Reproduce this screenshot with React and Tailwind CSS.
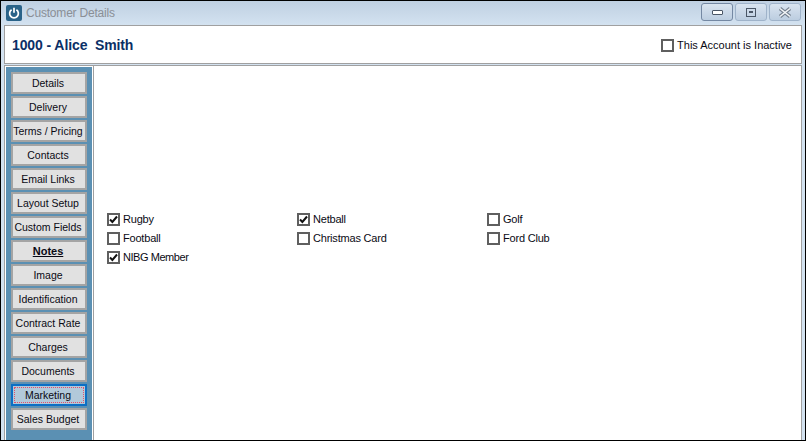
const nav = ["Details","Delivery","Terms / Pricing","Contacts","Email Links","Layout Setup","Custom Fields","Notes","Image","Identification","Contract Rate","Charges","Documents","Marketing","Sales Budget"];

function Check({ checked, label, tight }) {
  return (
    <div className="flex items-center h-[19px]">
      <span className="w-[13px] h-[13px] border-2 border-[#5f5f5f] bg-white flex items-center justify-center shrink-0">
        {checked && (
          <svg width="9" height="9" viewBox="0 0 9 9"><path d="M1 4.5 L3.4 7 L8 1.5" fill="none" stroke="#111" strokeWidth="2" /></svg>
        )}
      </span>
      <span className={`ml-[3px] text-[11px] leading-none text-[#0a0a14] ${tight ? "tracking-[-0.45px]" : "tracking-[-0.2px]"}`}>{label}</span>
    </div>
  );
}

function WinBtn({ children, border }) {
  return (
    <div className={`w-[32px] h-[18px] rounded-[3px] border ${border} bg-gradient-to-b from-[#d9e4f0] to-[#bccde0] flex items-center justify-center`}>
      {children}
    </div>
  );
}

export default function App() {
  return (
    <div className="w-[806px] h-[441px] overflow-hidden bg-[#d3e2f0] border border-black flex flex-col font-['Liberation_Sans',Arial,sans-serif]">
      <div className="h-[24px] shrink-0 flex items-center bg-gradient-to-b from-[#bfd0e2] to-[#d3e2f0] pl-[5px] pr-[4px]">
        <div className="w-[16px] h-[16px] rounded-[2px] bg-[#2a6389] flex items-center justify-center">
          <svg width="12" height="12" viewBox="0 0 11 11" fill="none" stroke="#fff" strokeWidth="1.6"><path d="M3.3 2.6a4 4 0 1 0 4.4 0" /><path d="M5.5 0.8v4.4" /></svg>
        </div>
        <span className="ml-[4px] text-[12px] tracking-[-0.2px] text-[#8a8f96]">Customer Details</span>
        <div className="ml-auto flex gap-[2px] mb-[2px]">
          <WinBtn border="border-[#7488a3]"><span className="w-[11px] h-[5px] border border-[#4a5666] bg-white rounded-[1px]" /></WinBtn>
          <WinBtn border="border-[#9fb3ca]"><span className="w-[10px] h-[9px] border border-[#4a5666] flex items-center justify-center"><span className="w-[4px] h-[2px] bg-[#4a5666]" /></span></WinBtn>
          <WinBtn border="border-[#9fb3ca]">
            <svg width="14" height="11" viewBox="0 0 14 11">
              <path d="M2 1.5 L12 9.5 M12 1.5 L2 9.5" stroke="#75818f" strokeWidth="3.6" />
              <path d="M2 1.5 L12 9.5 M12 1.5 L2 9.5" stroke="#f4f6f8" strokeWidth="1.6" />
            </svg>
          </WinBtn>
        </div>
      </div>
      <div className="h-[39px] shrink-0 mx-[3px] bg-white border border-[#a0a0a0] flex items-center pl-[7px] pr-[9px] pt-[1px]">
        <span className="text-[14px] font-bold text-[#0b2f66] tracking-[-0.1px] whitespace-pre">1000 - Alice  Smith</span>
        <div className="ml-auto flex items-center">
          <span className="w-[13px] h-[13px] border-2 border-[#5f5f5f]" />
          <span className="ml-[3px] text-[11px] text-[#0a0a14]">This Account is Inactive</span>
        </div>
      </div>
      <div className="flex-1 min-h-0 mx-[3px] mt-[1px] flex">
        <div className="w-[89px] shrink-0 bg-white border-t border-l border-[#a0a0a0] p-[1px] pb-0">
          <div className="h-full bg-[#5b90b3] pt-[5px] px-[5px] flex flex-col gap-[2px]">
            {nav.map((n) => {
              const active = n === "Marketing";
              return (
                <div key={n} className={`h-[22px] shrink-0 flex items-center justify-center text-[10.5px] text-[#0a0a14] ${active ? "border-2 border-[#0b6fc4] bg-[#b2c9da] p-[1px]" : "border-2 border-[#a4a4a4] bg-[#e1e1e1] pt-[1px] pr-[2px]"} ${n === "Notes" ? "font-bold underline text-[11px]" : ""}`}>
                  {active ? <span className="w-full h-full border border-dotted border-[#e0506a] flex items-center justify-center pt-[1px] pr-[2px]">{n}</span> : n}
                </div>
              );
            })}
          </div>
        </div>
        <div className="flex-1 bg-white border border-b-0 border-[#a0a0a0] pt-[144px] pl-[13px]">
          <div className="grid grid-cols-[190px_190px_190px]">
            <Check checked label="Rugby" />
            <Check checked label="Netball" />
            <Check label="Golf" />
            <Check label="Football" />
            <Check label="Christmas Card" />
            <Check label="Ford Club" />
            <Check checked label="NIBG Member" tight />
          </div>
        </div>
      </div>
    </div>
  );
}
